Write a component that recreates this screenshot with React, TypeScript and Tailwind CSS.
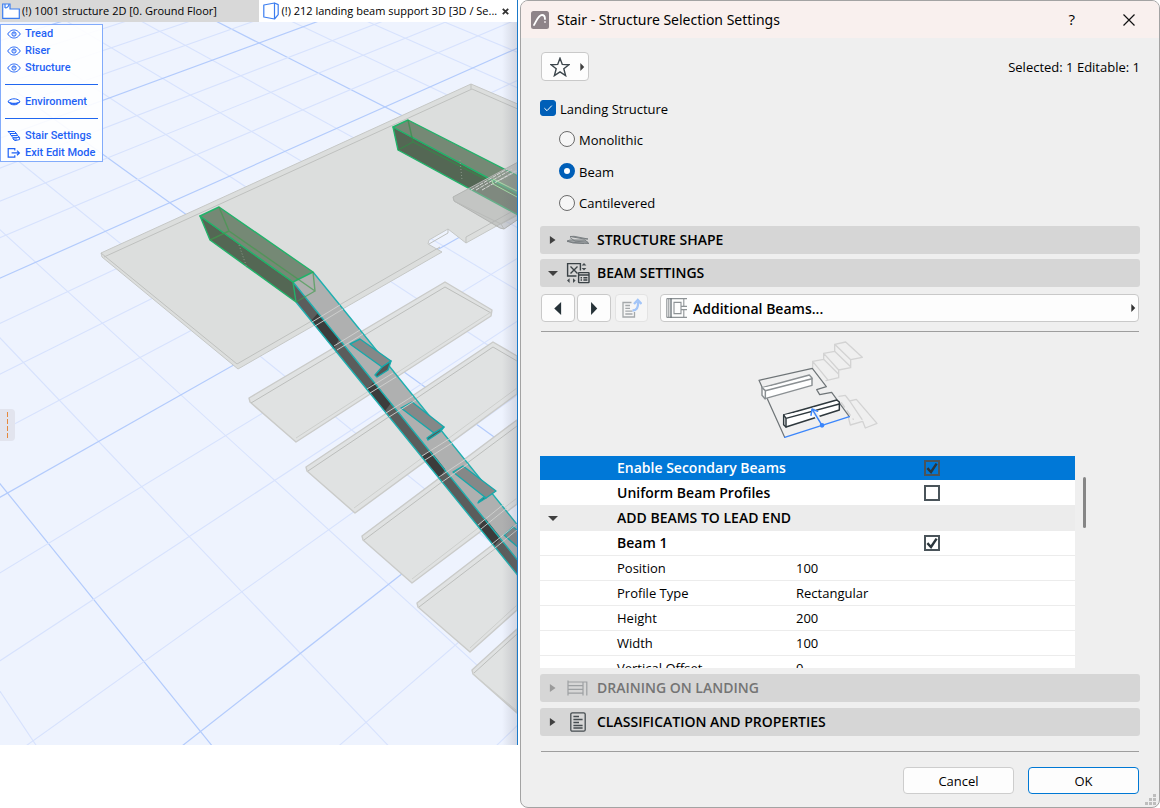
import { useState } from 'react';
import type { ReactNode } from 'react';

// Perspective projection of the ground grid into viewport coordinates
const project = (u: number, v: number) => {
  const w = 1 + 0.05337 * u - 0.0489 * v;
  return {
    x: (96.37 * u + 38.445 * v + 7.5) / w,
    y: (-28 * u + 23.855 * v + 493) / w,
  };
};

const range = (from: number, to: number) =>
  Array.from({ length: to - from + 1 }, (_, i) => from + i);

const GridLines = () => {
  const lines = [
    ...range(-6, 22).map((u) => ({ key: `u${u}`, a: project(u, -20), b: project(u, 8), major: u % 4 === 0 })),
    ...range(-20, 8).map((v) => ({ key: `v${v}`, a: project(-6, v), b: project(22, v), major: v % 4 === 0 })),
  ];
  return (
    <g>
      {lines.map(({ key, a, b, major }) => (
        <line
          key={key}
          x1={a.x}
          y1={a.y}
          x2={b.x}
          y2={b.y}
          stroke={major ? '#b3cbfc' : '#d7e2fd'}
          strokeWidth={major ? 1.2 : 1.1}
        />
      ))}
    </g>
  );
};

const treads = [
  { outer: '249,398 445,282 492,310 491,316 296,442 250,402', inner: '251,403 445,287 491,313', low: '296,438 491,312' },
  { outer: '306,467 493,342 517,356 517,394 355,513 307,471', inner: '308,471 493,347 517,361', low: '354,508 517,388' },
  { outer: '362,536 517,420 517,504 412,583 363,540', inner: '364,540 517,426', low: '412,579 517,498' },
  { outer: '417,603 517,526 517,610 470,652 418,607', inner: '419,607 517,532', low: '470,648 517,605' },
  { outer: '472,670 517,629 517,713 473,674', inner: '474,673 517,634', low: '473,674 517,711' },
];

const brackets = [
  { top: '350,344 360,339 391,361 382,367', end: '391,361 388,370 377,377 375,375 382,367' },
  { top: '401,408 412,402 444,427 434,433', end: '444,427 440,432 428,440 427,438 434,433' },
  { top: '453,472 463,466 496,491 486,498', end: '486,498 478,503 479,501 484,497' },
  { top: '504,535 513,527 520,532 520,549', end: '' },
];

const shadedStringer = [
  '311,321 318,313 339,339 334,349',
  '367,389 374,382 391,403 385,411',
  '422,457 430,450 445,469 440,478',
  '479,527 485,518 501,538 494,546',
];

const ModelView = () => (
  <svg viewBox="0 22 517 723" className="block h-auto w-full" role="img" aria-label="3D model view">
    <defs>
      <linearGradient id="edgeShade" x1="0" x2="1" y1="0" y2="0">
        <stop offset="0" stopColor="#667" stopOpacity="0" />
        <stop offset="1" stopColor="#667" stopOpacity="0.2" />
      </linearGradient>
    </defs>
    <rect x="0" y="22" width="517" height="723" fill="#eef3fe" />
    <GridLines />

    {/* Landing slab */}
    <g stroke="#c6c8c6" strokeLinejoin="round">
      <path
        d="M101 253 L471 84 L520 105 V213 L466 243 L448 229 L429 240 L428 244 L442 252 L238 369 L102 257 Z"
        fill="#dcdedd"
      />
      <path
        d="M104 257 L472 89 L520 110 M237 364 L440 247 M471 84 V89 M466 243 V237 L520 207 M448 229 V233 L429 244 M101 253 L237 364"
        fill="none"
        stroke="#bfc1bf"
      />
    </g>

    {/* Treads */}
    {treads.map((t) => (
      <g key={t.outer} strokeLinejoin="round">
        <polygon points={t.outer} fill="#e0e2e2" stroke="#cacbc9" strokeWidth="1.4" />
        <polyline points={t.inner} fill="none" stroke="#bcbebc" />
        <polyline points={t.low} fill="none" stroke="#cdcfcd" />
      </g>
    ))}

    {/* Stringer */}
    <polygon points="293,282 313,272 352,320 520,528 520,563" fill="#afb0b0" />
    <polygon points="293,282 520,563 520,578 296,302" fill="#5b5d5c" />
    {shadedStringer.map((points) => (
      <polygon key={points} points={points} fill="#3c3c3c" />
    ))}
    <path
      d="M313 272 L352 320 L520 528 M293 282 L520 563 M296 302 L520 578"
      fill="none"
      stroke="#1fb0b0"
      strokeWidth="1.4"
    />
    <g stroke="#16a9ab" strokeWidth="1.4" strokeLinejoin="round">
      {brackets.map((b) => (
        <g key={b.top}>
          <polygon points={b.top} fill="#858888" />
          {b.end && <polygon points={b.end} fill="#535756" />}
        </g>
      ))}
    </g>
    <path
      d="M312 322 L340 305 M315 326 L343 309 M334 346 L360 330 M337 350 L363 334 M367 389 L393 373 M370 393 L396 377 M386 413 L413 396 M389 417 L416 400 M422 456 L449 439 M425 460 L452 443 M439 477 L466 459 M442 482 L468 464 M478 525 L504 504 M481 529 L507 508 M492 544 L517 524 M495 548 L517 530"
      fill="none"
      stroke="#d0d1d0"
      strokeWidth=".9"
    />

    {/* Landing beams */}
    <g strokeLinejoin="round" strokeWidth="1.4">
      <polygon points="200,216 293,282 296,302 210,240" fill="#546754" stroke="#21b36a" />
      <polygon points="200,216 219,207 313,272 293,282" fill="#758975" stroke="#21b36a" />
      <path d="M219 207 L229 231 L315 291 L313 272 M229 231 L210 240 M315 291 L296 302" fill="none" stroke="#3f9b4c" strokeOpacity=".65" />
      <path d="M239 245 L247 268" fill="none" stroke="#8c9a8c" strokeDasharray="1 2" strokeWidth="1" />
      <polygon points="393,127 520,195 520,216 398,150" fill="#546754" stroke="#21b36a" />
      <polygon points="393,127 408,120 520,177 520,195" fill="#758975" stroke="#21b36a" />
      <path d="M408 120 L413 142 L520 197 M413 142 L398 150" fill="none" stroke="#2f9147" strokeOpacity=".65" />
      <path d="M460 160 L462 180" fill="none" stroke="#8c9a8c" strokeDasharray="1 2" strokeWidth="1" />
    </g>

    {/* First tread of the upper flight */}
    <g strokeLinejoin="round">
      <polygon points="453,197 520,161 520,218 504,229 500,228 454,201" fill="#a9abaa" fillOpacity="0.5" stroke="#b2b4b2" />
      <path d="M454 201 L501 224 L520 214 M501 224 L504 229" fill="none" stroke="#b9bbb9" />
      <path d="M471 190 L507 169 M476 190 L512 169 M482 190 L517 170 M496 182 L517 171" fill="none" stroke="#d6d8d6" strokeDasharray="4 1" />
      <path d="M492 180 L493 184 L517 197 M493 179 L517 191" fill="none" stroke="#a6dfa8" />
    </g>

    <rect x="502" y="22" width="15" height="723" fill="url(#edgeShade)" />
  </svg>
);

const EyeIcon = () => (
  <svg viewBox="0 0 14 10" className="h-[10px] w-[14px]" fill="none" stroke="currentColor">
    <path d="M.7 5 C3 1.6 5 1 7 1 S11 1.6 13.3 5 C11 8.4 9 9 7 9 S3 8.4 .7 5 Z" />
    <circle cx="7" cy="5" r="2.1" />
    <path d="M7 3.4 V5.4" />
  </svg>
);

const ClosedEyeIcon = () => (
  <svg viewBox="0 0 14 10" className="h-[10px] w-[14px]" fill="none" stroke="currentColor">
    <path d="M1 4.4 C3 2.2 5 1.8 7 1.8 S11 2.2 13 4.4" />
    <path d="M1 4.6 C3 7.2 5 7.8 7 7.8 S11 7.2 13 4.6 C11 6 9 6.3 7 6.3 S3 6 1 4.6 Z" fill="currentColor" />
  </svg>
);

const StairIcon = () => (
  <svg viewBox="0 0 14 12" className="h-[12px] w-[14px]" fill="none" stroke="currentColor">
    <path d="M1 1.5 H7.5 L9.5 3.5 H3 Z M3 3.5 L4 5.5 H10.5 L12.6 7.4 H6 L4 5.5 M6 7.4 V9 L8 10.6 L12.6 9.6 V7.4 M9.5 3.5 L10.5 5.5 M6 9 H10" />
  </svg>
);

const ExitIcon = () => (
  <svg viewBox="0 0 14 12" className="h-[12px] w-[14px]" fill="none" stroke="currentColor" strokeWidth="1.2">
    <path d="M7.8 3.6 V1.6 H1.2 V10.2 H7.8 V8.2 M4.6 5.9 H12.4 M10 3.6 L12.4 5.9 L10 8.2" />
  </svg>
);

const MenuItem = ({ icon, label }: { icon: ReactNode; label: string }) => (
  <button className="flex h-[17px] w-full items-center gap-1 pl-[6px] text-left whitespace-nowrap">
    {icon}
    <span className="pt-[2px]">{label}</span>
  </button>
);

const MenuDivider = () => (
  <div className="flex h-[17px] items-center px-1">
    <div className="h-px w-full bg-[#1f66f0]" />
  </div>
);

const EditMenu = () => (
  <nav className="absolute top-[24px] left-0 w-[103px] border border-[#82abfb] bg-white/90 font-['Roboto','Open_Sans',sans-serif] text-[11px] font-medium text-[#1f62f5]">
    <MenuItem icon={<EyeIcon />} label="Tread" />
    <MenuItem icon={<EyeIcon />} label="Riser" />
    <MenuItem icon={<EyeIcon />} label="Structure" />
    <MenuDivider />
    <MenuItem icon={<ClosedEyeIcon />} label="Environment" />
    <MenuDivider />
    <MenuItem icon={<StairIcon />} label="Stair Settings" />
    <MenuItem icon={<ExitIcon />} label="Exit Edit Mode" />
  </nav>
);

const TabBar = () => (
  <div className="grid h-[22px] grid-cols-2 text-[11px] text-black">
    <button className="flex min-w-0 items-center gap-[2px] bg-[#d8d8d8] pl-[2px] whitespace-nowrap">
      <svg viewBox="0 0 18 16" className="h-[16px] w-[18px] shrink-0" fill="#fff" stroke="#3b7df0" strokeWidth="1.2">
        <path d="M.7 1 H8 V6 H17.3 V15.3 H.7 Z" />
        <path d="M3 1 V5 M3 5 A4 4 0 0 0 7 1" fill="none" />
      </svg>
      <span>(!) 1001 structure 2D [0. Ground Floor]</span>
    </button>
    <div className="flex min-w-0 items-center bg-white pr-[6px] pl-1">
      <button className="flex min-w-0 flex-1 items-center gap-[3px] whitespace-nowrap">
        <svg viewBox="0 0 16 18" className="h-[18px] w-[16px] shrink-0" fill="none" stroke="#3b7df0" strokeWidth="1.2" strokeLinejoin="round">
          <path d="M.8 3 L11.5 1 V17 L.8 15 Z M11.5 1 L15.2 2.6 V12.6 L11.5 17" />
        </svg>
        <span>(!) 212 landing beam support 3D [3D / Se...</span>
      </button>
      <button aria-label="Close tab" className="p-[2px]">
        <svg viewBox="0 0 7 7" className="h-[7px] w-[7px]" stroke="#333" strokeWidth="1.8">
          <path d="M.8 .8 L6.2 6.2 M6.2 .8 L.8 6.2" />
        </svg>
      </button>
    </div>
  </div>
);

const Triangle = ({ dir, className }: { dir: 'left' | 'right' | 'down'; className: string }) => (
  <svg viewBox="0 0 8 8" className={className} fill="currentColor" preserveAspectRatio="none">
    {dir === 'right' && <path d="M1.5 0 L6 4 L1.5 8 Z" />}
    {dir === 'left' && <path d="M6.5 0 L1 4 L6.5 8 Z" />}
    {dir === 'down' && <path d="M0 2 H8 L4 7 Z" />}
  </svg>
);

const ShapeIcon = () => (
  <svg viewBox="0 0 24 22" className="h-[22px] w-[24px]" fill="#a9adaf" stroke="#757b7e" strokeWidth=".9" strokeLinejoin="round">
    <path d="M4 7.5 L18 10 L22 10 L8 7.3 Z" />
    <path d="M1 12 L4 11 H19 L23 14.5 L7 14 Z" />
    <path d="M4 8.5 L9 12.2 L22 13.2 M1 12.5 L18 14.6" fill="none" />
  </svg>
);

const BeamIcon = () => (
  <svg viewBox="0 0 24 22" className="h-[22px] w-[24px]" fill="none" stroke="#3a4246" strokeWidth="1.4">
    <path d="M10.5 14 H1.6 V1.6 H14.4 V8.6 M4.5 4.5 L11.5 11.5 M11.5 4.5 L4.5 11.5" />
    <path d="M18 1 L20.4 3.6 H15.6 Z M18 8.6 L20.4 6 H15.6 Z M1 18.6 L3.6 16.2 V21 Z M9.6 18.6 L7 16.2 V21 Z" fill="#454c50" stroke="none" />
    <rect x="12.6" y="10.6" width="10.4" height="10" rx=".5" />
    <path d="M12.6 13 H23 M14.6 15.7 H16 M17.4 15.7 H21.4 M14.6 18 H16 M17.4 18 H21.4" />
  </svg>
);

const DrainIcon = () => (
  <svg viewBox="0 0 24 22" className="h-[22px] w-[24px]" fill="none" stroke="#9da0a2" strokeWidth="1.2">
    <path d="M2 3.5 V18.5 M17 5 V18.5 M2 5 H17 M2 8.6 H17 M2 12.4 H17 M2 16.2 H17 M17 5 H21 M20.8 4.4 V18.5" />
  </svg>
);

const PropertiesIcon = () => (
  <svg viewBox="0 0 24 22" className="h-[22px] w-[24px]" fill="none" stroke="#454c50" strokeWidth="1.3">
    <rect x="4.8" y="1.8" width="14.4" height="18.4" rx="1.5" />
    <path d="M7.4 5.5 H13 M7.4 8.5 H16.6 M7.4 11.5 H13 M7.4 14.5 H16.6 M7.4 17 H16.6" />
  </svg>
);

type SectionProps = { title: string; icon: ReactNode; open?: boolean; disabled?: boolean };

const SectionHeader = ({ title, icon, open = false, disabled = false }: SectionProps) => (
  <button
    disabled={disabled}
    aria-expanded={open}
    className="flex h-[28px] w-full items-center gap-[6px] rounded-[3px] bg-[#d6d6d6] pl-2 text-[14px] leading-[20px] font-semibold text-black disabled:text-[#747474]"
  >
    <span className={disabled ? 'text-[#9a9a9a]' : 'text-[#404040]'}>
      <Triangle dir={open ? 'down' : 'right'} className="h-[8px] w-[10px]" />
    </span>
    <span className="flex items-center gap-[7px] pl-[2px]">
      {icon}
      {title}
    </span>
  </button>
);

const StairPreview = () => (
  <svg viewBox="0 6 480 372" className="h-[124px] w-[160px]" fill="none" strokeLinejoin="round" strokeLinecap="round">
    <g stroke="#d3d3d3" strokeWidth="4">
      <path d="M218 112 V94 L251 88 V70 L284 64 V43 L317 36 L367 82 L332 89 V113 L296 120 V143 L258 152 M218 94 L263 149 M251 88 L296 133 M251 70 L296 120 M284 64 L332 110 M284 43 L332 89" />
      <path d="M297 199 L316 196 L329 213 L349 208 L411 280 L376 294 L368 274 L331 285 L325 262 M329 213 L366 268" />
      <path d="M304 218 L340 268" strokeDasharray="16 14" />
    </g>
    <path d="M57 151 L217 115 L259 170 L230 179 L239 194 L275 187 L328 260 M57 151 L134 322" stroke="#6e7477" strokeWidth="3.6" />
    <g stroke="#8b9093" strokeWidth="4.4" fill="#fff">
      <path d="M66 173 L208 135 L216 144 V166 L75 206 L66 196 Z" />
      <path d="M66 173 L76 182 L216 146 M76 182 V206" />
    </g>
    <g stroke="#2e383d" strokeWidth="4.4" fill="#fff">
      <path d="M131 255 L290 210 L298 216 V240 L138 291 L131 284 Z" />
      <path d="M131 255 L138 265 L298 222 M138 265 V291" />
    </g>
    <path d="M134 322 L328 260" stroke="#3b86fb" strokeWidth="4" />
    <path d="M246 286 L220 240" stroke="#efefef" strokeWidth="14" />
    <path d="M246 286 L217 238 M213 256 L216 237 L233 244" stroke="#3b86fb" strokeWidth="4.4" />
    <circle cx="246" cy="286" r="7" fill="#3b86fb" />
  </svg>
);

type TableCheckProps = { label: string; checked: boolean; onChange: () => void };

const TableCheck = ({ label, checked, onChange }: TableCheckProps) => (
  <label className="relative block size-4">
    <input
      type="checkbox"
      aria-label={label}
      checked={checked}
      onChange={onChange}
      className="block size-4 appearance-none border-2 border-[#4a545a]"
    />
    {checked && (
      <svg viewBox="0 0 16 16" className="pointer-events-none absolute inset-0 size-4" fill="none" stroke="#2b363c" strokeWidth="2.4">
        <path d="M3.4 8.2 L7 12 L12.6 3.6" />
      </svg>
    )}
  </label>
);

const params = [
  { name: 'Position', value: '100' },
  { name: 'Profile Type', value: 'Rectangular' },
  { name: 'Height', value: '200' },
  { name: 'Width', value: '100' },
  { name: 'Vertical Offset', value: '0' },
];

const headingCell = 'p-0 text-[14px] font-semibold';

const ParameterTable = () => {
  const [secondary, setSecondary] = useState(true);
  const [uniform, setUniform] = useState(false);
  const [beamOne, setBeamOne] = useState(true);

  return (
    <div className="flex h-[212px] pr-[53px]">
      <div className="flex-1 overflow-hidden bg-white">
        <table className="w-full table-fixed border-collapse text-left text-[13px] leading-[18px] text-black">
          <colgroup>
            <col className="w-[77px]" />
            <col className="w-[179px]" />
            <col className="w-[128px]" />
            <col />
          </colgroup>
          <tbody>
            <tr className="h-[24px] bg-[#0078d7] text-white">
              <td />
              <th colSpan={2} className={headingCell}>Enable Secondary Beams</th>
              <td className="p-0">
                <TableCheck label="Enable Secondary Beams" checked={secondary} onChange={() => setSecondary(!secondary)} />
              </td>
            </tr>
            <tr className="h-[25px]">
              <td />
              <th colSpan={2} className={headingCell}>Uniform Beam Profiles</th>
              <td className="p-0">
                <TableCheck label="Uniform Beam Profiles" checked={uniform} onChange={() => setUniform(!uniform)} />
              </td>
            </tr>
            <tr className="h-[26px] bg-[#ececec]">
              <td className="p-0 pl-2 text-[#404040]">
                <Triangle dir="down" className="h-[8px] w-[10px]" />
              </td>
              <th colSpan={3} className={headingCell}>ADD BEAMS TO LEAD END</th>
            </tr>
            <tr className="h-[24px] border-b border-[#ececec]">
              <td />
              <th colSpan={2} className={headingCell}>Beam 1</th>
              <td className="p-0">
                <TableCheck label="Beam 1" checked={beamOne} onChange={() => setBeamOne(!beamOne)} />
              </td>
            </tr>
            {params.map((p) => (
              <tr key={p.name} className="h-[25px] border-b border-[#ececec]">
                <td />
                <th className="p-0 pt-px font-normal">{p.name}</th>
                <td colSpan={2} className="p-0 pt-px">{p.value}</td>
              </tr>
            ))}
          </tbody>
        </table>
      </div>
      <div className="w-[12px] pt-[21px] pl-2">
        <div className="h-[51px] w-[3px] rounded-full bg-[#868686]" />
      </div>
    </div>
  );
};

const structureTypes = ['Monolithic', 'Beam', 'Cantilevered'];

const SettingsDialog = () => {
  const [landing, setLanding] = useState(true);
  const [type, setType] = useState('Beam');

  return (
    <section
      role="dialog"
      aria-label="Stair - Structure Selection Settings"
      className="relative flex min-h-screen flex-col overflow-hidden rounded-lg border border-[#a3a3a3] bg-[#efefef]"
    >
      <header className="flex h-[37px] items-center bg-[#f9f0ee] pr-6 pl-[10px]">
        <svg viewBox="0 0 18 18" className="size-[18px]" fill="none">
          <rect width="18" height="18" rx="2.5" fill="#8e8489" />
          <path d="M3 14 C6 9 7.5 4 11 4 C13.4 4 14 6 14 8" stroke="#fff" strokeWidth="1.8" strokeLinecap="round" />
          <circle cx="14" cy="11" r="1" fill="#e6dfe2" />
        </svg>
        <h1 className="flex-1 pl-2 font-['Noto_Sans','Open_Sans',sans-serif] text-[14px] text-black">
          Stair - Structure Selection Settings
        </h1>
        <button aria-label="Help" className="mr-12 text-[15px] text-black">?</button>
        <button aria-label="Close">
          <svg viewBox="0 0 12 12" className="size-3" stroke="#111" strokeWidth="1.2">
            <path d="M.5 .5 L11.5 11.5 M11.5 .5 L.5 11.5" />
          </svg>
        </button>
      </header>

      <div className="flex flex-1 flex-col px-[19px] pt-[14px] text-[13px] text-black">
        <div className="flex items-center justify-between pl-px">
          <button aria-label="Favorites" className="flex h-[29px] w-[48px] items-center gap-[9px] rounded-[4px] border border-[#c9c9c9] bg-[#fdfdfd] pl-2">
            <svg viewBox="0 0 20 20" className="size-5" fill="none" stroke="#3c464c" strokeWidth="1.4">
              <path d="M10 1.2 L12.3 7.4 L19 7.7 L13.8 11.8 L15.6 18.6 L10 14.8 L4.4 18.6 L6.2 11.8 L1 7.7 L7.7 7.4 Z" />
            </svg>
            <Triangle dir="right" className="h-[8px] w-[7px] text-[#404040]" />
          </button>
          <p className="pt-[2px]">Selected: 1 Editable: 1</p>
        </div>

        <label className="mt-[18px] flex h-[18px] items-center gap-1">
          <span className="relative size-4">
            <input
              type="checkbox"
              checked={landing}
              onChange={() => setLanding(!landing)}
              className="block size-4 appearance-none rounded-[3px] border border-[#767676] checked:border-[#005fb8] checked:bg-[#005fb8]"
            />
            {landing && (
              <svg viewBox="0 0 16 16" className="pointer-events-none absolute inset-0 size-4" fill="none" stroke="#fff">
                <path d="M4.4 8.2 L7 10.7 L11.8 5.6" />
              </svg>
            )}
          </span>
          <span className="pt-[3px]">Landing Structure</span>
        </label>
        <div className="mt-[6px] mb-[8px] pl-[19px]">
          {structureTypes.map((name) => (
            <label key={name} className="flex h-8 items-center gap-1 last:h-[31px]">
              <input
                type="radio"
                name="structure"
                checked={type === name}
                onChange={() => setType(name)}
                className="size-4 appearance-none rounded-full border border-[#6b6b6b] bg-[#f6f6f6] checked:border-5 checked:border-[#005fb8] checked:bg-white"
              />
              <span className="pt-[3px]">{name}</span>
            </label>
          ))}
        </div>

        <SectionHeader title="STRUCTURE SHAPE" icon={<ShapeIcon />} />
        <div className="mt-[5px]">
          <SectionHeader title="BEAM SETTINGS" icon={<BeamIcon />} open />
        </div>

        <div className="mt-[7px] flex h-[28px] px-px">
          <button aria-label="Previous page" className="flex w-[34px] items-center justify-center rounded-[4px] border border-[#c9c9c9] bg-[#fdfdfd] text-[#263238]">
            <Triangle dir="left" className="h-[13px] w-[10px]" />
          </button>
          <button aria-label="Next page" className="ml-[2px] flex w-[34px] items-center justify-center rounded-[4px] border border-[#c9c9c9] bg-[#fdfdfd] text-[#263238]">
            <Triangle dir="right" className="h-[13px] w-[11px]" />
          </button>
          <button aria-label="Export" disabled className="ml-1 flex w-[33px] items-center justify-center rounded-[4px] border border-[#e3e3e3] bg-[#f6f6f6]">
            <svg viewBox="0 0 20 20" className="size-5" fill="none" stroke="#a4a8aa" strokeWidth="1.3">
              <path d="M9.5 4.5 H1 V19 H12.5 V14" />
              <path d="M3.3 7.5 H8 M3.3 10.3 H8 M3.3 13.1 H10.5 M3.3 16 H10.5" />
              <path d="M10.5 12.5 C14.5 12.5 16.5 9.5 16 4 M12 6 L15.8 2 L19.6 6" stroke="#a3c5f8" strokeWidth="2.4" />
            </svg>
          </button>
          <div className="relative ml-3 flex-1">
            <select
              aria-label="Settings page"
              className="h-full w-full appearance-none rounded-[4px] border border-[#c9c9c9] bg-[#fdfdfd] pl-8 text-[14px] font-semibold"
            >
              <option>Additional Beams...</option>
            </select>
            <svg viewBox="0 0 22 20" className="pointer-events-none absolute top-1 left-[6px] h-[20px] w-[22px]" fill="none" stroke="#8d9295" strokeWidth="1.1">
              <path d="M.8 .6 V19.4 M2.8 .6 V19.4 M.8 .6 H21 M.8 19.4 H21 M8 4.4 H15 V15.6 H8 Z M17.8 .6 V8 M17.8 12 V19.4 M15 8.4 H21 M15 11.6 H21" />
              <path d="M5 .6 V19.4" stroke="#455057" />
            </svg>
            <Triangle dir="right" className="pointer-events-none absolute top-[10px] right-[2px] h-[8px] w-[7px] text-[#333]" />
          </div>
        </div>

        <hr className="mx-px mt-[9px] border-[#9e9e9e]" />
        <div className="flex justify-center pr-10">
          <StairPreview />
        </div>
        <ParameterTable />

        <div className="mt-[6px]">
          <SectionHeader title="DRAINING ON LANDING" icon={<DrainIcon />} disabled />
        </div>
        <div className="mt-[6px]">
          <SectionHeader title="CLASSIFICATION AND PROPERTIES" icon={<PropertiesIcon />} />
        </div>

        <hr className="mx-px mt-[15px] border-[#9e9e9e]" />
        <footer className="mt-[15px] mb-3 flex justify-end gap-[14px] px-px">
          <button className="h-[27px] w-[111px] rounded-[4px] border border-[#cdcdcd] bg-[#fdfdfd] pt-[2px]">Cancel</button>
          <button className="h-[27px] w-[111px] rounded-[4px] border border-[#0078d4] bg-[#fdfdfd] pt-[2px]">OK</button>
        </footer>
      </div>

      <svg viewBox="0 0 11 11" className="absolute right-[3px] bottom-[2px] size-[11px]" fill="#bdbdbd">
        <path d="M8 0 h3 v3 h-3 Z M4 4 h3 v3 h-3 Z M8 4 h3 v3 h-3 Z M0 8 h3 v3 h-3 Z M4 8 h3 v3 h-3 Z M8 8 h3 v3 h-3 Z" />
      </svg>
    </section>
  );
};

const App = () => (
  <main className="grid min-h-screen grid-cols-[13fr_16fr] bg-white font-['Open_Sans','Noto_Sans',sans-serif]">
    <div className="bg-white pr-[2px]">
      <div className="relative border-r border-[#1b79c9]">
        <TabBar />
        <ModelView />
        <EditMenu />
        <button
          aria-label="Show palette"
          className="absolute top-[409px] left-0 flex h-8 w-[15px] items-center justify-center rounded-r bg-[#e2e4ee]"
        >
          <svg viewBox="0 0 1 26" className="h-[26px] w-px" stroke="#e6883c">
            <path d="M.5 0 V26" strokeDasharray="5 2" />
          </svg>
        </button>
      </div>
    </div>
    <SettingsDialog />
  </main>
);

export default App;
